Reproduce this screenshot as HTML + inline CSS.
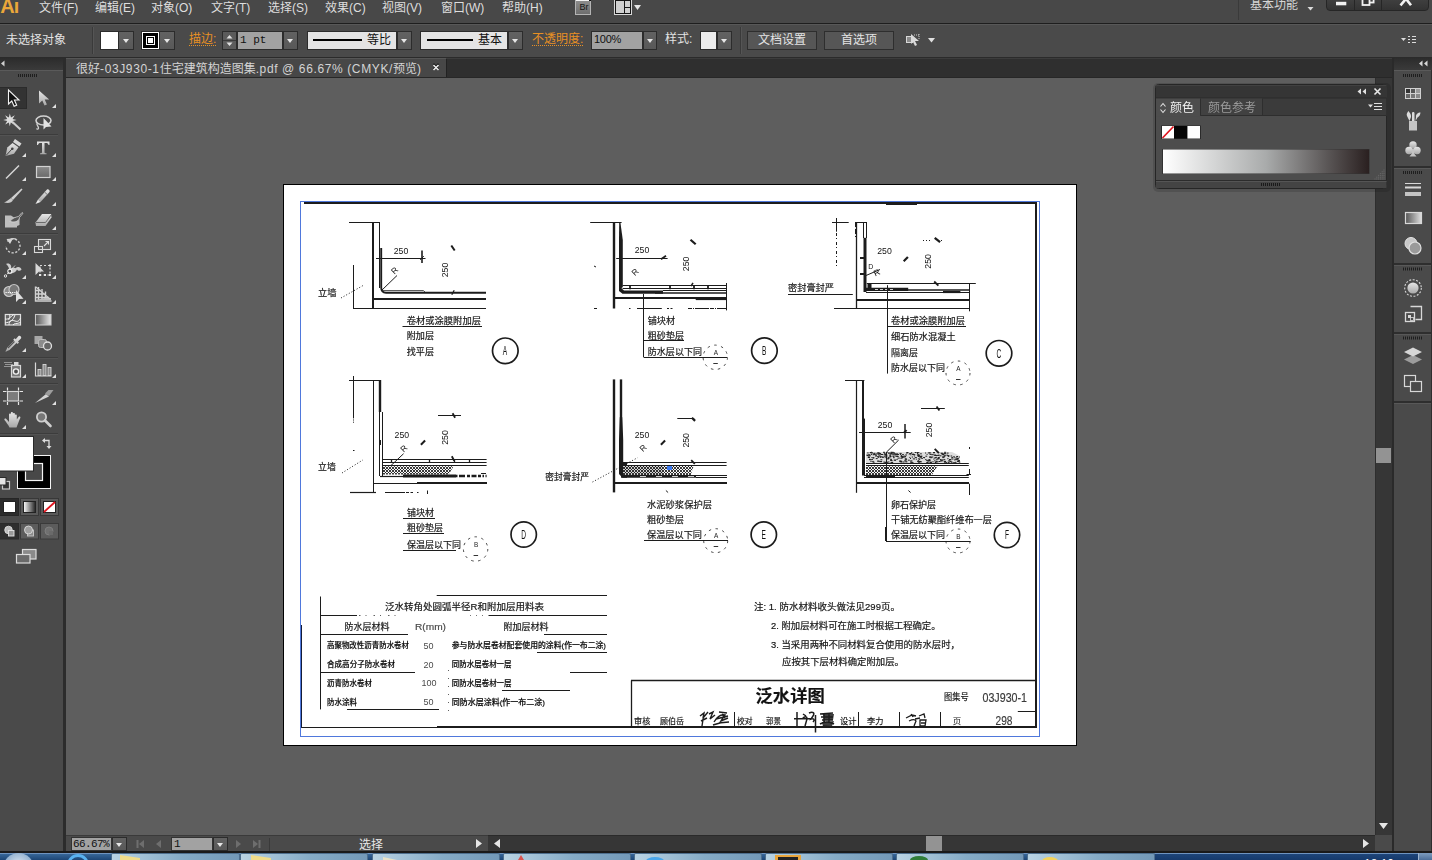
<!DOCTYPE html>
<html lang="zh-CN"><head><meta charset="utf-8"><title>Adobe Illustrator</title>
<style>
html,body{margin:0;padding:0}
body{width:1432px;height:860px;overflow:hidden;position:relative;background:#5e5e5e;
 font-family:"Liberation Sans","Noto Sans CJK SC",sans-serif;font-size:12px;color:#dcdcdc}
.a{position:absolute}
.t{position:absolute;white-space:nowrap;line-height:1}
#menubar{left:0;top:0;width:1432px;height:23px;background:#484848}
#menusep{left:0;top:23px;width:1432px;height:1px;background:#1e1e1e}
#ctrl{left:0;top:24px;width:1432px;height:33px;background:#4a4a4a;border-top:1px solid #585858;box-sizing:border-box}
#ctrlsep{left:0;top:57px;width:1432px;height:1px;background:#2b2b2b}
#tabbar{left:66px;top:58px;width:1326px;height:20px;background:#2f2f2f;border-top:1px solid #3c3c3c;border-bottom:1px solid #272727;box-sizing:border-box}
#tab{left:66px;top:58px;width:381px;height:19px;background:#474747;border-top:1px solid #565656;border-right:1px solid #222;box-sizing:border-box}
.mi{top:2px;font-size:12px;color:#dedede}
.ml{letter-spacing:0}
.tl{letter-spacing:.62px}
.dd{background:linear-gradient(#626262,#585858);border:1px solid #2c2c2c;box-sizing:border-box}
.dd:after{content:"";position:absolute;left:50%;top:50%;margin:-1.500px 0 0 -3.500px;border:3.500px solid transparent;border-top:4.500px solid #e6e6e6;border-bottom:0}
.org{color:#e89024;border-bottom:1px dotted #e89024;padding-bottom:0px}
.btn{background:#565656;border:1px solid #2e2e2e;box-sizing:border-box;text-align:center;color:#e4e4e4;font-size:12px}
svg{position:absolute;left:0;top:0;overflow:visible}

</style></head>
<body>
<div class="a" id="menubar"></div><div class="a" id="menusep"></div>
<div class="t" style="left:.2px;top:-4px;font-size:20px;font-weight:bold;color:#eaa73a;letter-spacing:-.8px">Ai</div>
<div class="t mi" style="left:39px">文件<span class="ml">(F)</span></div>
<div class="t mi" style="left:95px">编辑<span class="ml">(E)</span></div>
<div class="t mi" style="left:151px">对象<span class="ml">(O)</span></div>
<div class="t mi" style="left:211px">文字<span class="ml">(T)</span></div>
<div class="t mi" style="left:268px">选择<span class="ml">(S)</span></div>
<div class="t mi" style="left:325px">效果<span class="ml">(C)</span></div>
<div class="t mi" style="left:382px">视图<span class="ml">(V)</span></div>
<div class="t mi" style="left:441px">窗口<span class="ml">(W)</span></div>
<div class="t mi" style="left:502px">帮助<span class="ml">(H)</span></div>
<div class="a" style="left:575px;top:-1px;width:16px;height:16px;background:linear-gradient(#8e8e8e,#6e6e6e);border:1px solid #b4b4b4;box-sizing:border-box"></div>
<div class="a" style="left:576px;top:0;width:13px;height:1px;background:#f4f4f4"></div><div class="a" style="left:589px;top:0;width:2px;height:1px;background:#111"></div>
<div class="t" style="left:579.5px;top:3px;font-size:9px;color:#161616">Br</div>
<svg width="1432" height="24"><rect x="614.5" y="-1.500" width="17" height="16" fill="#cfcfcf" stroke="#d8d8d8"/><rect x="615.5" y="0.500" width="15" height="13" fill="none" stroke="#151515"/><path d="M624.500 0V14M624.500 7.500H631" stroke="#151515" fill="none"/><path d="M634 5h7l-3.500 5z" fill="#e4e4e4"/></svg>
<div class="a" style="left:1238px;top:0;width:1px;height:20px;background:#3a3a3a"></div>
<div class="t" style="left:1250px;top:-1px;font-size:12px;color:#d6d6d6">基本功能</div>
<svg width="1432" height="24"><path d="M1307.500 7h6l-3 3.500z" fill="#dcdcdc"/></svg>
<div class="a" style="left:1326px;top:-6px;width:103px;height:17px;background:linear-gradient(#454545,#333);border:1px solid #262626;border-radius:4px;box-sizing:border-box"></div>
<div class="a" style="left:1354px;top:0;width:1px;height:10px;background:#262626"></div><div class="a" style="left:1381px;top:0;width:1px;height:10px;background:#262626"></div>
<svg width="1432" height="24"><rect x="1336" y="1.800" width="10.300" height="3.500" fill="#f2f2f2"/><rect x="1366" y="-4" width="7.600" height="6.500" fill="none" stroke="#f2f2f2" stroke-width="1.800"/><rect x="1362.500" y="-1" width="7" height="6" fill="#363636" stroke="#f2f2f2" stroke-width="1.800"/><path d="M1400.500 5.300l5.500-6.500l5 6.500" stroke="#f2f2f2" stroke-width="2.600" fill="none"/></svg>
<div class="a" id="ctrl"></div><div class="a" id="ctrlsep"></div>
<div class="t" style="left:6px;top:34px;font-size:12px;color:#e2e2e2">未选择对象</div>
<div class="a" style="left:92px;top:27px;width:1px;height:27px;background:#3a3a3a"></div><div class="a" style="left:93px;top:27px;width:1px;height:27px;background:#555"></div>
<div class="a" style="left:100px;top:31px;width:19px;height:19px;background:#fff;border:1px solid #2c2c2c;box-sizing:border-box"></div>
<div class="a dd" style="left:118px;top:31px;width:16px;height:19px"></div>
<div class="a" style="left:141px;top:31px;width:19px;height:19px;background:#fff;border:1px solid #2c2c2c;box-sizing:border-box"></div><div class="a" style="left:143px;top:33px;width:15px;height:15px;background:#000"></div>
<div class="a" style="left:146px;top:36px;width:9px;height:9px;border:1px solid #fff;box-sizing:border-box;background:#000"></div>
<div class="a" style="left:148px;top:38px;width:5px;height:5px;background:#fff"></div>
<div class="a dd" style="left:159px;top:31px;width:16px;height:19px"></div>
<div class="t org" style="left:189px;top:33px;font-size:12px">描边:</div>
<div class="a" style="left:222px;top:31px;width:15px;height:19px;background:#5b5b5b;border:1px solid #2c2c2c;box-sizing:border-box"></div>
<svg width="1432" height="60"><path d="M226.5 38.5l3-3.5l3 3.5zM226.5 42.5l3 3.5l3-3.5z" fill="#e0e0e0"/><path d="M223 40.5h13" stroke="#3a3a3a"/></svg>
<div class="a" style="left:237px;top:31px;width:46px;height:19px;background:#a2a2a2;border:1px solid #2c2c2c;box-sizing:border-box"></div>
<div class="t" style="left:240px;top:35px;font-size:11px;color:#111;font-family:'Liberation Mono',monospace">1 pt</div>
<div class="a dd" style="left:283px;top:31px;width:15px;height:19px"></div>
<div class="a" style="left:307px;top:31px;width:90px;height:19px;background:#e4e4e4;border:1px solid #2c2c2c;box-sizing:border-box"></div>
<div class="a" style="left:313px;top:39px;width:49px;height:2px;background:#000"></div>
<div class="t" style="left:367px;top:34px;font-size:12px;color:#111">等比</div>
<div class="a dd" style="left:397px;top:31px;width:15px;height:19px"></div>
<div class="a" style="left:420px;top:31px;width:88px;height:19px;background:#e4e4e4;border:1px solid #2c2c2c;box-sizing:border-box"></div>
<div class="a" style="left:427px;top:39px;width:46px;height:2px;background:#000"></div>
<div class="t" style="left:478px;top:34px;font-size:12px;color:#111">基本</div>
<div class="a dd" style="left:508px;top:31px;width:15px;height:19px"></div>
<div class="t org" style="left:532px;top:33px;font-size:12px">不透明度:</div>
<div class="a" style="left:591px;top:31px;width:52px;height:19px;background:#a2a2a2;border:1px solid #2c2c2c;box-sizing:border-box"></div>
<div class="t" style="left:594px;top:34px;font-size:11px;color:#111;letter-spacing:-0.3px">100%</div>
<div class="a dd" style="left:643px;top:31px;width:14px;height:19px"></div>
<div class="t" style="left:665px;top:33px;font-size:12px;color:#e2e2e2">样式:</div>
<div class="a" style="left:700px;top:31px;width:17px;height:19px;background:#ececec;border:1px solid #2c2c2c;box-sizing:border-box"></div>
<div class="a dd" style="left:717px;top:31px;width:15px;height:19px"></div>
<div class="a" style="left:740px;top:27px;width:1px;height:27px;background:#3a3a3a"></div><div class="a" style="left:741px;top:27px;width:1px;height:27px;background:#555"></div>
<div class="a btn" style="left:747px;top:31px;width:70px;height:19px;line-height:17px">文档设置</div>
<div class="a btn" style="left:824px;top:31px;width:70px;height:19px;line-height:17px">首选项</div>
<svg width="1432" height="60"><rect x="906.5" y="36.5" width="6" height="6" fill="#8a8a8a" stroke="#d8d8d8"/><path d="M911 34l8 7h-4l2 4l-2 1l-2 -4l-2 2z" fill="#dadada"/><path d="M914 35h6M919 34v5" stroke="#ccc" stroke-dasharray="1 1"/><path d="M928 38h7l-3.5 4.5z" fill="#e0e0e0"/><path d="M1401 38h5l-2.5 3z" fill="#dcdcdc"/><path d="M1408 36.5h2M1412 36.5h4M1408 39.5h2M1412 39.5h4M1408 42.5h2M1412 42.5h4" stroke="#dcdcdc"/></svg>
<div class="a" id="tabbar"></div><div class="a" id="tab"></div>
<div class="t" style="left:76px;top:63px;font-size:12px;color:#d4d4d4">很好<span class="tl">-03J930-1</span>住宅建筑构造图集<span class="tl">.pdf @ 66.67% (CMYK/</span>预览<span class="tl">)</span></div>
<svg width="1432" height="80"><path d="M433.500 63.800l5 5M438.500 63.800l-5 5" stroke="#111" stroke-width="1.500"/><path d="M433.500 65l5 5M438.500 65l-5 5" stroke="#eee" stroke-width="1.500"/></svg>
<div class="a" style="left:1375px;top:78px;width:17px;height:757px;background:#363636;border-left:1px solid #2e2e2e;box-sizing:border-box"></div>
<div class="a" style="left:1376px;top:448px;width:15px;height:15px;background:#939393"></div>
<div class="a" style="left:66px;top:835px;width:1326px;height:16px;background:#363636;border-top:1px solid #2a2a2a;box-sizing:border-box"></div>
<div class="a" style="left:66px;top:835px;width:422px;height:16px;background:#4a4a4a;border-top:1px solid #3a3a3a;box-sizing:border-box"></div>
<div class="a" style="left:1375px;top:835px;width:17px;height:16px;background:#4a4a4a"></div>
<div class="a" style="left:926px;top:836px;width:16px;height:15px;background:#939393"></div>
<div class="a" style="left:71px;top:837px;width:41px;height:14px;background:#a2a2a2;border:1px solid #333;box-sizing:border-box"></div>
<div class="t" style="left:73px;top:838.500px;font-size:11px;color:#111;font-family:'Liberation Mono',monospace;letter-spacing:-0.6px;width:37px;overflow:hidden">66.67%</div>
<div class="a dd" style="left:112px;top:837px;width:15px;height:14px"></div>
<div class="a" style="left:171px;top:837px;width:42px;height:14px;background:#a2a2a2;border:1px solid #333;box-sizing:border-box"></div>
<div class="t" style="left:174px;top:838.500px;font-size:11px;color:#111;font-family:'Liberation Mono',monospace">1</div>
<div class="a dd" style="left:213px;top:837px;width:15px;height:14px"></div>
<div class="a" style="left:269px;top:838px;width:1px;height:13px;background:#3a3a3a"></div>
<div class="t" style="left:359px;top:839px;font-size:12px;color:#e8e8e8">选择</div>
<svg width="1432" height="860"><g fill="#6e6e6e"><path d="M136.5 840h2v8h-2zM144 840v8l-5-4zM161 840v8l-5-4zM236 840v8l5-4zM253 840v8l5-4zM258.5 840h2v8h-2z"/></g><g fill="#e6e6e6"><path d="M476 839v9l6-4.500zM500 839v9l-6-4.500zM1363 839v9l6-4.500zM1379 823h9l-4.500 6z"/></g></svg>
<div class="a" style="left:0;top:851px;width:1432px;height:2px;background:#1a1a1a"></div>
<div class="a" style="left:0;top:853px;width:1432px;height:7px;background:linear-gradient(#3b6c9e,#1d4676)"></div><div class="a" style="left:0;top:853px;width:1432px;height:1px;background:#6f94c0"></div>
<div class="a" style="left:3px;top:853px;width:31px;height:31px;border-radius:50%;background:radial-gradient(circle at 50% 40%,#dfe9f3,#7fa3c7 70%,#2f5f93)"></div>
<div class="a" style="left:67px;top:854px;width:22px;height:22px;border-radius:50%;border:3px solid #59b2f0;box-sizing:border-box"></div>
<div class="a" style="left:111px;top:853px;width:129px;height:8px;background:linear-gradient(90deg,#b9d3e3,#85abc6 55%,#7399b8);border:1px solid #4e6f8e;border-bottom:0;border-radius:2px 2px 0 0;box-sizing:border-box"></div>
<div class="a" style="left:240px;top:853px;width:128px;height:8px;background:linear-gradient(90deg,#b9d3e3,#85abc6 55%,#7399b8);border:1px solid #4e6f8e;border-bottom:0;border-radius:2px 2px 0 0;box-sizing:border-box"></div>
<div class="a" style="left:372px;top:853px;width:128px;height:8px;background:linear-gradient(90deg,#b9d3e3,#85abc6 55%,#7399b8);border:1px solid #4e6f8e;border-bottom:0;border-radius:2px 2px 0 0;box-sizing:border-box"></div>
<div class="a" style="left:503px;top:853px;width:128px;height:8px;background:linear-gradient(90deg,#b9d3e3,#85abc6 55%,#7399b8);border:1px solid #4e6f8e;border-bottom:0;border-radius:2px 2px 0 0;box-sizing:border-box"></div>
<div class="a" style="left:634px;top:853px;width:128px;height:8px;background:linear-gradient(90deg,#b9d3e3,#85abc6 55%,#7399b8);border:1px solid #4e6f8e;border-bottom:0;border-radius:2px 2px 0 0;box-sizing:border-box"></div>
<div class="a" style="left:765px;top:853px;width:128px;height:8px;background:linear-gradient(90deg,#b9d3e3,#85abc6 55%,#7399b8);border:1px solid #4e6f8e;border-bottom:0;border-radius:2px 2px 0 0;box-sizing:border-box"></div>
<div class="a" style="left:896px;top:853px;width:128px;height:8px;background:linear-gradient(90deg,#b9d3e3,#85abc6 55%,#7399b8);border:1px solid #4e6f8e;border-bottom:0;border-radius:2px 2px 0 0;box-sizing:border-box"></div>
<div class="a" style="left:1027px;top:853px;width:128px;height:8px;background:linear-gradient(90deg,#b9d3e3,#85abc6 55%,#7399b8);border:1px solid #4e6f8e;border-bottom:0;border-radius:2px 2px 0 0;box-sizing:border-box"></div>
<svg width="1432" height="860"><path d="M120 855l20 3v3h-20z" fill="#f0dc8a"/><path d="M251 855l20 3v3h-20z" fill="#f0dc8a"/><path d="M383 857l14 3h-14z" fill="#e8e2c8"/><path d="M518 860l3-5l3 5z" fill="#d9534f"/><ellipse cx="655" cy="861" rx="9" ry="4" fill="#49a6ea"/><rect x="775" y="855" width="26" height="6" fill="#e9a53b"/><rect x="778" y="857" width="20" height="4" fill="#222"/><ellipse cx="919" cy="860" rx="9" ry="4" fill="#2f7d3a"/><ellipse cx="1050" cy="861" rx="8" ry="4" fill="#f2d25c"/></svg>
<div class="a" style="left:1155px;top:853px;width:263px;height:7px;background:linear-gradient(#1f477c,#163a6c)"></div><div class="a" style="left:1155px;top:853px;width:263px;height:1px;background:#6f94c0"></div>
<div class="a" style="left:1418px;top:853px;width:14px;height:7px;background:linear-gradient(#7d9cbf,#4d6f99);border-left:1px solid #9fb6d0;box-sizing:border-box"></div>
<div class="t" style="left:1364px;top:858px;font-size:12px;color:#fff">18:10</div><div class="a" style="left:0;top:58px;width:63px;height:793px;background:#4a4a4a"></div>
<div class="a" style="left:63px;top:58px;width:3px;height:793px;background:#2c2c2c"></div>
<div class="a" style="left:0;top:58px;width:63px;height:12px;background:linear-gradient(#2c2c2c,#3a3a3a)"></div>
<div class="a" style="left:0;top:70px;width:63px;height:1px;background:#5a5a5a"></div>
<div class="a" style="left:0;top:87px;width:27px;height:22px;background:#333;border:1px solid #2b2b2b;border-left:0;box-sizing:border-box"></div>
<div class="a" style="left:0;top:134px;width:58px;height:1px;background:#3c3c3c"></div><div class="a" style="left:0;top:135px;width:58px;height:1px;background:#535353"></div>
<div class="a" style="left:0;top:233px;width:58px;height:1px;background:#3c3c3c"></div><div class="a" style="left:0;top:234px;width:58px;height:1px;background:#535353"></div>
<div class="a" style="left:0;top:357px;width:58px;height:1px;background:#3c3c3c"></div><div class="a" style="left:0;top:358px;width:58px;height:1px;background:#535353"></div>
<div class="a" style="left:0;top:383px;width:58px;height:1px;background:#3c3c3c"></div><div class="a" style="left:0;top:384px;width:58px;height:1px;background:#535353"></div>
<div class="a" style="left:0;top:433px;width:58px;height:1px;background:#3c3c3c"></div><div class="a" style="left:0;top:434px;width:58px;height:1px;background:#535353"></div>
<svg width="70" height="860" viewBox="0 0 70 860"><defs><linearGradient id="gi" x1="0" y1="0" x2="0" y2="1"><stop offset="0" stop-color="#e6e6e6"/><stop offset="1" stop-color="#a8a8a8"/></linearGradient><linearGradient id="gh" x1="0" y1="0" x2="1" y2="0"><stop offset="0" stop-color="#555"/><stop offset="1" stop-color="#e8e8e8"/></linearGradient><linearGradient id="gr" x1="0" y1="0" x2="0" y2="1"><stop offset="0" stop-color="#8a8a8a"/><stop offset="1" stop-color="#6a6a6a"/></linearGradient></defs><path d="M4.500 60.500v6l-3.500-3z" fill="#d0d0d0"/><path d="M18 75.500h20" stroke="#1e1e1e" stroke-width="3" stroke-dasharray="1 1"/><path d="M56 104v4h-4z" fill="#e0e0e0"/><path d="M26 153v4h-4z" fill="#e0e0e0"/><path d="M56 153v4h-4z" fill="#e0e0e0"/><path d="M26 177v4h-4z" fill="#e0e0e0"/><path d="M56 177v4h-4z" fill="#e0e0e0"/><path d="M56 202v4h-4z" fill="#e0e0e0"/><path d="M56 226v4h-4z" fill="#e0e0e0"/><path d="M26 251v4h-4z" fill="#e0e0e0"/><path d="M56 251v4h-4z" fill="#e0e0e0"/><path d="M26 275v4h-4z" fill="#e0e0e0"/><path d="M56 275v4h-4z" fill="#e0e0e0"/><path d="M26 300v4h-4z" fill="#e0e0e0"/><path d="M56 300v4h-4z" fill="#e0e0e0"/><path d="M26 348v4h-4z" fill="#e0e0e0"/><path d="M26 374v4h-4z" fill="#e0e0e0"/><path d="M56 374v4h-4z" fill="#e0e0e0"/><path d="M56 401v4h-4z" fill="#e0e0e0"/><path d="M26 425v4h-4z" fill="#e0e0e0"/><path d="M8.500 90v14l3.300-3l2.300 5.300l2.600-1.100l-2.300-5.200h4.600z" fill="#111" stroke="#f2f2f2" stroke-width="1.100" stroke-linejoin="miter"/><path d="M39 90.500v13l3.300-3l2.200 5l2.400-1l-2.200-5h4.500z" fill="url(#gi)"/><path d="M9.800 113.500l1.200 4l3.800-2.200l-2.200 3.600l4 1.200l-4 .9l1.500 3.500l-3.300-2l-1 3.800l-1-3.900l-3.600 2.100l2-3.500l-4-1l4-1.100l-2.100-3.600l3.700 2.200z" fill="#dcdcdc"/><path d="M12.500 122l8 7.500" stroke="#cfcfcf" stroke-width="2"/><ellipse cx="43.500" cy="120.500" rx="7.500" ry="4.500" fill="none" stroke="#d2d2d2" stroke-width="1.600"/><path d="M37.500 123c-2 2 1 3 1 5c0 1.500-1.500 1.500-2 .5" fill="none" stroke="#d2d2d2" stroke-width="1.300"/><path d="M43.500 118v11.500l2.500-2.600l5.500-.4z" fill="#e2e2e2"/><path d="M15 139l6.500 4.500l-2 3l-6.500-4.500z" fill="#d8d8d8"/><path d="M12.500 143l6 4.200l-4.500 6.500l-8.500 2.300l1.800-8.500z" fill="url(#gi)"/><path d="M6 155.500l6-6.500" stroke="#444" stroke-width="1"/><circle cx="12.300" cy="148.700" r="1.300" fill="#444"/><path d="M37 141.500h12.500v3.500h-1c-.3-1.500-1-2.100-2.500-2.100h-1.500v9c0 1 .5 1.300 2 1.400v.9h-6.500v-.9c1.500-.1 2-.4 2-1.400v-9h-1.500c-1.500 0-2.200.6-2.500 2.100h-1z" fill="url(#gi)"/><path d="M6 178.500l13-13" stroke="#d8d8d8" stroke-width="1.500"/><rect x="36.500" y="166.500" width="13.500" height="11" fill="url(#gr)" stroke="#d2d2d2" stroke-width="1.200"/><path d="M21.500 188.500l1 1l-9.500 10.500l-2-2z" fill="#d0d0d0"/><path d="M11 198l2 2c-1 3-5 3.500-9 2.500c2.500-.5 4-2.500 7-4.500z" fill="#c8c8c8"/><path d="M47 189.500c1-1 3.500 1 2.500 2.500l-9 10l-2.500-2.500z" fill="url(#gi)"/><path d="M38 199.500l2.500 2.500l-5 2z" fill="#e8e8e8"/><path d="M44.500 192l2.800 2.600" stroke="#777" stroke-width="1"/><path d="M5 215.500h6l3 2h5.500v7.500l-2.500 1v1.500h-12z" fill="#bdbdbd"/><path d="M10 221.500c2-3.500 6-4.500 8.500-5l3.500-4l1 .8l-3.500 4.200c-.5 3-3 5.500-9.500 4z" fill="#555" stroke="#dedede" stroke-width=".7"/><path d="M42 214h9l.5 3.500l-6 8.500h-9.500l-.5-3.500z" fill="url(#gi)"/><path d="M36 222.500h9.500l6-8" fill="none" stroke="#6a6a6a" stroke-width="1"/><path d="M8 241a7 7 0 1 1 -2 5" fill="none" stroke="#cfcfcf" stroke-width="1.400" stroke-dasharray="2.200 1.600"/><path d="M6.500 239l6.500-.5l-3 5.500z" fill="#d8d8d8"/><path d="M7.500 241.500a7 7 0 0 1 9 -2" fill="none" stroke="#cfcfcf" stroke-width="1.400"/><rect x="38.500" y="239.500" width="12" height="10" fill="#5c5c5c" stroke="#d8d8d8" stroke-width="1.100"/><rect x="34.500" y="246.500" width="8" height="6" fill="none" stroke="#d8d8d8" stroke-width="1.100"/><path d="M44 246l4.500-4.500M45.500 241.500h3v3" fill="none" stroke="#e0e0e0" stroke-width="1.100"/><path d="M6 264c2.500 2 4 5 2.500 9.500c3.500.5 7.500-1 8.500-4c1 1.500 3 1.700 4.500.3c-.5-3-4-3.500-6-1.500c-1.500-1-3-1-4.500 0c1-3-1.500-6-5-4.300z" fill="#cdcdcd"/><path d="M5.500 276l10-11" stroke="#f0f0f0" stroke-width="1" stroke-dasharray="1.500 1"/><circle cx="9.800" cy="271.300" r="2" fill="#4a4a4a" stroke="#f4f4f4" stroke-width="1.100"/><circle cx="5.500" cy="276" r="1.200" fill="#4a4a4a" stroke="#f4f4f4" stroke-width=".9"/><rect x="40" y="265.500" width="10" height="9.500" fill="none" stroke="#d8d8d8" stroke-width="1.200" stroke-dasharray="2 2"/><path d="M35.500 263v12l3.500-3.500h5z" fill="#d8d8d8"/><g fill="#e6e6e6"><rect x="49" y="264.500" width="2" height="2"/><rect x="49" y="274" width="2" height="2"/><rect x="39" y="274" width="2" height="2"/><rect x="44" y="274" width="2" height="2"/></g><circle cx="9" cy="291.500" r="5" fill="#8a8a8a" stroke="#cfcfcf" stroke-width="1.200"/><circle cx="14" cy="289.500" r="5" fill="#777" stroke="#c4c4c4" stroke-width="1.200"/><path d="M5.500 292.500h10" stroke="#fff" stroke-width="1.200" stroke-dasharray="1.200 1"/><path d="M16 290v12l3-3l4.500-.3z" fill="#e0e0e0"/><path d="M35.500 286.500v14.500h16M38.500 287v13M42 289v10.500M45.500 291.500v8M35.500 290.500h5M35.500 294h9M35.500 297.500h13" stroke="#d2d2d2" stroke-width="1.400" fill="none"/><path d="M35 300l16 0l0-2l-5-.2z" fill="#bdbdbd"/><path d="M36 287l14 12" stroke="#cfcfcf" stroke-width="1.100"/><rect x="5.300" y="314.500" width="15.200" height="10.500" fill="#666" stroke="#e0e0e0" stroke-width="1.200"/><path d="M5 319c4 1 6-3 9-4.500M5 323c5-1 8-2 10-8M9 325c0-5 3-5 6-4s4 0 5.500-3M13 325c1-2 4-1 7.500-2.500M9.500 314.500c1 2 0 4-1 5.500" fill="none" stroke="#f0f0f0" stroke-width="1"/><rect x="35.500" y="314.500" width="15.500" height="10.500" fill="url(#gh)" stroke="#c8c8c8" stroke-width="1.100"/><path d="M18.500 336c1.500-1 3.500 1 2.500 2.500l-3 3l1 1l-1.500 1.500l-1-1l-7 7l-2.500 1l-1 .8l-.6-.6l.8-1l1-2.500l7-7l-1-1l1.500-1.500l1 1z" fill="url(#gi)"/><path d="M8 348l6.500-6.500" stroke="#555" stroke-width="1.100"/><rect x="34.500" y="336" width="8" height="8" fill="#a8a8a8"/><rect x="38.500" y="339.500" width="8" height="8" rx="2" fill="#8c8c8c" stroke="#bcbcbc"/><circle cx="47.500" cy="346" r="4" fill="#666" stroke="#e0e0e0" stroke-width="1.300"/><rect x="11.500" y="365.500" width="9" height="11.500" fill="#777" stroke="#d8d8d8" stroke-width="1.200"/><rect x="14" y="362" width="4.500" height="3.500" fill="#d8d8d8"/><circle cx="16" cy="371.500" r="2.600" fill="#4a4a4a" stroke="#f0f0f0" stroke-width="1.400"/><path d="M4.500 362.500h8M5.500 364.500h7M4.500 366.500h7" stroke="#e0e0e0" stroke-width="1" stroke-dasharray="1 1"/><path d="M35.500 362.500v13.500h16" fill="none" stroke="#d8d8d8" stroke-width="1.200"/><rect x="38" y="369.500" width="3" height="6" fill="#8c8c8c" stroke="#d8d8d8" stroke-width=".9"/><rect x="43" y="364.500" width="3" height="11" fill="#8c8c8c" stroke="#d8d8d8" stroke-width=".9"/><rect x="48" y="367.500" width="3" height="8" fill="#8c8c8c" stroke="#d8d8d8" stroke-width=".9"/><rect x="7.500" y="391.500" width="11" height="9.500" fill="#7c7c7c" stroke="#d8d8d8" stroke-width="1.100"/><path d="M3 391.500h3.500M19.500 391.500h3.500M3 401h3.500M19.500 401h3.500M7.500 387.500v3M18.500 387.500v3M7.500 402v3M18.500 402v3" stroke="#e6e6e6" stroke-width="1.200"/><path d="M35 403l11-9l3 2.500z" fill="#d4d4d4"/><path d="M45 393.500l3.500-3.500h5l-4.500 6z" fill="#9c9c9c"/><path d="M9.500 427.500c-1.500-3-3.500-5.500-5-7.500c-.6-1 .8-2 1.800-1l2.700 3v-7.500c0-1.200 1.900-1.200 1.900 0v-1.500c0-1.300 2-1.300 2 0v1c0-1.300 2-1.300 2 0v1.500c0-1.200 1.900-1.200 1.900 0v4l1.800-2.500c.8-1 2.300-.2 1.700 1c-1.200 2.500-2.500 6-3.800 9.500z" fill="url(#gi)"/><circle cx="41.500" cy="417" r="4.600" fill="#777" stroke="#cfcfcf" stroke-width="1.800"/><path d="M45 420.500l5.500 5.500" stroke="#cfcfcf" stroke-width="2.600" stroke-linecap="round"/><rect x="17.500" y="455.500" width="33" height="33" fill="#000" stroke="#f4f4f4" stroke-width="1"/><rect x="25.500" y="463.500" width="17" height="17" fill="#484848" stroke="#f4f4f4" stroke-width="1.200"/><rect x="-1" y="436.500" width="34.500" height="34.500" fill="#fff" stroke="#2a2a2a" stroke-width="1"/><path d="M43.500 440.500h5.500v6" fill="none" stroke="#dcdcdc" stroke-width="1.300"/><path d="M42 440.500l3-2.500v5zM49 449l-2.500-3h5z" fill="#dcdcdc"/><rect x="2.500" y="481.500" width="7" height="7.500" fill="#333" stroke="#c8c8c8" stroke-width="1.200"/><rect x="-1.500" y="477.500" width="7.500" height="7.500" fill="#e4e4e4" stroke="#2a2a2a" stroke-width="1"/><rect x="-1" y="498.500" width="19.500" height="17" fill="#2c2c2c" stroke="#262626"/><rect x="20.5" y="498.500" width="18" height="17" fill="#5a5a5a" stroke="#383838"/><rect x="40.5" y="498.500" width="18" height="17" fill="#5a5a5a" stroke="#383838"/><rect x="3.500" y="501.500" width="12" height="11" fill="#fff" stroke="#222"/><linearGradient id="gm" x1="0" y1="0" x2="1" y2="0"><stop offset="0" stop-color="#fff"/><stop offset="1" stop-color="#222"/></linearGradient><rect x="23.500" y="501.500" width="12" height="11" fill="url(#gm)" stroke="#222"/><rect x="43.500" y="501.500" width="12" height="11" fill="#fff" stroke="#222"/><path d="M44 512l11-10" stroke="#e0141e" stroke-width="1.800"/><rect x="-1" y="523.500" width="19.500" height="15.500" fill="#2e2e2e" stroke="#2a2a2a"/><rect x="20.500" y="523.500" width="18" height="15.500" fill="#5c5c5c" stroke="#3a3a3a"/><rect x="40.500" y="523.500" width="18" height="15.500" fill="#5c5c5c" stroke="#3a3a3a"/><circle cx="8.500" cy="530" r="3.800" fill="#bdbdbd" stroke="#e4e4e4" stroke-width=".8"/><rect x="8.500" y="530.500" width="5.500" height="5.500" fill="#9a9a9a" stroke="#e4e4e4" stroke-width=".9"/><rect x="27.500" y="530" width="6" height="6" fill="#8a8a8a" stroke="#c8c8c8" stroke-width=".9"/><circle cx="28.500" cy="530" r="4" fill="#a0a0a0" stroke="#dcdcdc" stroke-width=".9"/><circle cx="49" cy="531" r="4" fill="#707070" stroke="#808080" stroke-width=".9"/><rect x="49" y="531" width="4" height="4" fill="#6a6a6a"/><rect x="22.500" y="549.500" width="13.500" height="9.500" fill="#8a8a8a" stroke="#dcdcdc" stroke-width="1.200"/><rect x="16.500" y="554.500" width="13.500" height="8.500" fill="#6a6a6a" stroke="#dcdcdc" stroke-width="1.200"/></svg><svg width="1432" height="860" viewBox="0 0 1432 860" font-family="'Liberation Sans','Noto Sans CJK SC',sans-serif" fill="none" style="will-change:transform"><defs><pattern id="xh" width="3" height="3" patternUnits="userSpaceOnUse"><rect width="3" height="3" fill="#f6f6f6"/><path d="M0 0L3 3M3 0L0 3" stroke="#181818" stroke-width=".85"/></pattern></defs><rect x="283.500" y="184.500" width="793" height="561" fill="#fff" stroke="#000" stroke-width="1"/><path d="M304 203L1037 203" stroke="#1c1c1c" stroke-width="2"/><path d="M1036 202L1036 728" stroke="#1c1c1c" stroke-width="2"/><path d="M437 727L1037 727" stroke="#1c1c1c" stroke-width="2"/><path d="M301 727.5L437 727.5" stroke="#1c1c1c" stroke-width="1"/><path d="M301 625L301 728" stroke="#141c38" stroke-width="2"/><path d="M886 204.5L917 204.5" stroke="#1c1c1c" stroke-width="1"/><rect x="300.500" y="201.500" width="739" height="535" stroke="#4f78dc" stroke-width="1"/><path d="M349 222.5L380 222.5" stroke="#1c1c1c" stroke-width="1"/><path d="M373 222L373 308.5" stroke="#1c1c1c" stroke-width="2"/><path d="M379.5 222L379.5 288" stroke="#1c1c1c" stroke-width="1"/><path d="M381.200 248V287.500Q381.200 292.700 386 292.700H486" stroke="#1c1c1c" stroke-width="1.9" fill="none"/><path d="M383 290.600H423.500l1.500 1.500" stroke="#1c1c1c" stroke-width="0.8" fill="none"/><path d="M373 299L486 299" stroke="#1c1c1c" stroke-width="2"/><path d="M353 308.5L486 308.5" stroke="#1c1c1c" stroke-width="1"/><path d="M353.5 265L353.5 308.4" stroke="#1c1c1c" stroke-width="1"/><path d="M376 258.5L425.5 258.5" stroke="#1c1c1c" stroke-width="1"/><path d="M422 250.5L422 263" stroke="#1c1c1c" stroke-width="1.6"/><path d="M420.2 259.8L423.8 256.2" stroke="#1c1c1c" stroke-width="1"/><text x="401" y="254.1" font-size="8.7" fill="#141414" text-anchor="middle">250</text><text x="0" y="3.1" font-size="8.7" fill="#141414" text-anchor="middle" transform="translate(445 270) rotate(-90)">250</text><path d="M451.3 245.5L454.7 250.5" stroke="#1c1c1c" stroke-width="2"/><path d="M451.8 294.7L454.2 290.3" stroke="#1c1c1c" stroke-width="1.3"/><path d="M381.5 290.5L397 275.5" stroke="#1c1c1c" stroke-width="1"/><text x="0" y="3.1" font-size="8.5" fill="#141414" text-anchor="middle" transform="translate(394.5 270.5) rotate(-45)">R</text><text x="318" y="295.9" font-size="9" fill="#161616" stroke="#161616" stroke-width=".18" textLength="18.5" lengthAdjust="spacingAndGlyphs">立墙</text><path d="M341 298L364 285" stroke="#1c1c1c" stroke-width="1" stroke-dasharray="1 2"/><text x="406.7" y="324.2" font-size="9" fill="#161616" stroke="#161616" stroke-width=".18" textLength="74.3" lengthAdjust="spacingAndGlyphs">卷材或涂膜附加层</text><path d="M402.5 326.5L482 326.5" stroke="#1c1c1c" stroke-width="1"/><text x="406.7" y="339.2" font-size="9" fill="#161616" stroke="#161616" stroke-width=".18" textLength="27.3" lengthAdjust="spacingAndGlyphs">附加层</text><text x="406.7" y="354.9" font-size="9" fill="#161616" stroke="#161616" stroke-width=".18" textLength="27.3" lengthAdjust="spacingAndGlyphs">找平层</text><circle cx="505.3" cy="350.8" r="12.8" fill="none" stroke="#1c1c1c" stroke-width="1.7"/><text x="0" y="4.3" font-size="12" fill="#111" text-anchor="middle" transform="translate(505 350.6) scale(0.55 1)">A</text><path d="M590.2 222.5L621.6 222.5" stroke="#1c1c1c" stroke-width="1"/><path d="M614 222L614 308.5" stroke="#1c1c1c" stroke-width="2.4"/><path d="M619.200 222.400H620.400L622.800 240V287L619 290V240z" stroke="#1c1c1c" stroke-width="0" fill="#1c1c1c"/><path d="M619 286L624 290.600H663V293.800H622.500L619 291z" stroke="#1c1c1c" stroke-width="0" fill="#1c1c1c"/><path d="M663 290.5L726.4 290.5" stroke="#1c1c1c" stroke-width="1"/><path d="M655 293L726.4 293" stroke="#1c1c1c" stroke-width="1.6"/><path d="M622.6 285.5L726.4 285.5" stroke="#1c1c1c" stroke-width="1"/><path d="M622.6 288.5L726.4 288.5" stroke="#1c1c1c" stroke-width="1"/><path d="M630 285.4L630 289.2" stroke="#1c1c1c" stroke-width="1.8"/><path d="M670 285.4L670 289.2" stroke="#1c1c1c" stroke-width="1.8"/><path d="M694 285.4L694 289.2" stroke="#1c1c1c" stroke-width="1.8"/><path d="M708 285.4L708 289.2" stroke="#1c1c1c" stroke-width="1.8"/><path d="M614 298L726.4 298" stroke="#1c1c1c" stroke-width="2"/><path d="M695.7 299.5L726.4 299.5" stroke="#1c1c1c" stroke-width="1.2"/><path d="M594 308.5L597 308.5" stroke="#1c1c1c" stroke-width="1"/><path d="M629 308.5L630.5 308.5" stroke="#1c1c1c" stroke-width="1"/><path d="M637 308.5L661.8 308.5" stroke="#1c1c1c" stroke-width="1"/><path d="M667 308.5L674 308.5" stroke="#1c1c1c" stroke-width="1" stroke-dasharray="2 1.5"/><path d="M688 308.5L726.4 308.5" stroke="#1c1c1c" stroke-width="1" stroke-dasharray="4 1 1 1 14 1"/><path d="M726.5 283L726.5 310.4" stroke="#1c1c1c" stroke-width="1"/><path d="M643.5 294L643.5 357" stroke="#1c1c1c" stroke-width="1"/><text x="647.8" y="324.2" font-size="9" fill="#161616" stroke="#161616" stroke-width=".18" textLength="27.2" lengthAdjust="spacingAndGlyphs">铺块材</text><text x="647.8" y="339.2" font-size="9" fill="#161616" stroke="#161616" stroke-width=".18" textLength="36.2" lengthAdjust="spacingAndGlyphs">粗砂垫层</text><path d="M643.6 340.5L684 340.5" stroke="#1c1c1c" stroke-width="1"/><text x="647.8" y="354.9" font-size="9" fill="#161616" stroke="#161616" stroke-width=".18" textLength="54.2" lengthAdjust="spacingAndGlyphs">防水层以下同</text><path d="M643.6 357.5L727 357.5" stroke="#1c1c1c" stroke-width="1"/><circle cx="715.3" cy="357.3" r="12.2" fill="none" stroke="#1c1c1c" stroke-width="0.8" stroke-dasharray="2.5 4.5"/><text x="0" y="2.9" font-size="8" fill="#222" text-anchor="middle" transform="translate(715.8 352) scale(0.8 1)">A</text><path d="M713.3 363.5L717.8 363.5" stroke="#333" stroke-width="1"/><circle cx="764.4" cy="350.6" r="12.8" fill="none" stroke="#1c1c1c" stroke-width="1.7"/><text x="0" y="4.3" font-size="12" fill="#111" text-anchor="middle" transform="translate(764.2 350.6) scale(0.55 1)">B</text><text x="642" y="253.4" font-size="8.7" fill="#141414" text-anchor="middle">250</text><path d="M616.2 258.5L667.6 258.5" stroke="#1c1c1c" stroke-width="1"/><path d="M661 259.2L666 255.8" stroke="#1c1c1c" stroke-width="1.8"/><text x="0" y="3.1" font-size="8.7" fill="#141414" text-anchor="middle" transform="translate(685.8 263.9) rotate(-90)">250</text><path d="M690.5 239.7L695.7 244.3" stroke="#1c1c1c" stroke-width="2.2"/><path d="M691 286.2L693 282.8" stroke="#1c1c1c" stroke-width="1.5"/><text x="0" y="3.1" font-size="8.5" fill="#141414" text-anchor="middle" transform="translate(635 272) rotate(-45)">R</text><path d="M594 266L596 267" stroke="#1c1c1c" stroke-width="1"/><path d="M856.5 222L856.5 308.5" stroke="#1c1c1c" stroke-width="1.3"/><path d="M855.5 222L855.5 237" stroke="#1c1c1c" stroke-width="1" stroke-dasharray="5 2"/><path d="M863.5 222L863.5 238" stroke="#1c1c1c" stroke-width="1"/><path d="M866.5 222L866.5 238" stroke="#1c1c1c" stroke-width="1"/><path d="M865 237.8L865 292" stroke="#1c1c1c" stroke-width="3"/><path d="M832 222.5L848.7 222.5" stroke="#1c1c1c" stroke-width="1"/><path d="M856 222.5L866.8 222.5" stroke="#1c1c1c" stroke-width="1"/><path d="M836.5 218L836.5 231.7" stroke="#1c1c1c" stroke-width="1"/><path d="M836.5 233L836.5 266.5" stroke="#1c1c1c" stroke-width="1" stroke-dasharray="3 2 1 3"/><path d="M866.8 283.5L975.8 283.5" stroke="#1c1c1c" stroke-width="1"/><path d="M866 289.3L908.2 289.3" stroke="#1c1c1c" stroke-width="3.2"/><path d="M875 289.5L893 289.5" stroke="#fff" stroke-width="0.8" stroke-dasharray="3 2"/><path d="M908 290L969 290" stroke="#1c1c1c" stroke-width="1.6"/><path d="M866 292.5L969 292.5" stroke="#1c1c1c" stroke-width="1"/><path d="M943 292L960.4 292" stroke="#1c1c1c" stroke-width="2.2"/><rect x="867.500" y="284" width="4" height="4" fill="#1c1c1c"/><path d="M856 300L969 300" stroke="#1c1c1c" stroke-width="2.2"/><path d="M834 308.5L969 308.5" stroke="#1c1c1c" stroke-width="1"/><path d="M969.5 283L969.5 311.3" stroke="#1c1c1c" stroke-width="1"/><text x="788" y="291.2" font-size="9" fill="#161616" stroke="#161616" stroke-width=".18" textLength="46" lengthAdjust="spacingAndGlyphs">密封膏封严</text><path d="M788 294.5L852.8 294.5" stroke="#1c1c1c" stroke-width="1"/><path d="M887.5 285.2L887.5 373.6" stroke="#1c1c1c" stroke-width="1"/><text x="891" y="324.2" font-size="9" fill="#161616" stroke="#161616" stroke-width=".18" textLength="74" lengthAdjust="spacingAndGlyphs">卷材或涂膜附加层</text><path d="M887 326.5L966 326.5" stroke="#1c1c1c" stroke-width="1"/><text x="891" y="340.2" font-size="9" fill="#161616" stroke="#161616" stroke-width=".18" textLength="64.7" lengthAdjust="spacingAndGlyphs">细石防水混凝土</text><text x="891" y="355.9" font-size="9" fill="#161616" stroke="#161616" stroke-width=".18" textLength="27" lengthAdjust="spacingAndGlyphs">隔离层</text><text x="891" y="371.2" font-size="9" fill="#161616" stroke="#161616" stroke-width=".18" textLength="54" lengthAdjust="spacingAndGlyphs">防水层以下同</text><circle cx="958" cy="373" r="12" fill="none" stroke="#1c1c1c" stroke-width="0.8" stroke-dasharray="2.5 4.5"/><text x="0" y="2.9" font-size="8" fill="#222" text-anchor="middle" transform="translate(958.5 367.7) scale(0.8 1)">A</text><path d="M956 379.5L960.5 379.5" stroke="#333" stroke-width="1"/><circle cx="999" cy="353.3" r="12.8" fill="none" stroke="#1c1c1c" stroke-width="1.7"/><text x="0" y="4.3" font-size="12" fill="#111" text-anchor="middle" transform="translate(999 353.3) scale(0.55 1)">C</text><text x="884.5" y="253.8" font-size="8.7" fill="#141414" text-anchor="middle">250</text><text x="0" y="3.1" font-size="8.7" fill="#141414" text-anchor="middle" transform="translate(928.3 261.4) rotate(-90)">250</text><path d="M934.7 237.8L940.1 242.2" stroke="#1c1c1c" stroke-width="2.2"/><path d="M923 240.5L932 240.5" stroke="#1c1c1c" stroke-width="1" stroke-dasharray="1 2"/><path d="M941 240.5L942 240.5" stroke="#1c1c1c" stroke-width="1"/><path d="M903.7 261.2L907.9 257" stroke="#1c1c1c" stroke-width="2.2"/><path d="M934.2 281.5L938.4 285.7" stroke="#1c1c1c" stroke-width="1.8"/><text x="0" y="3.1" font-size="8.5" fill="#141414" text-anchor="middle" transform="translate(876.8 272.5) rotate(-25)">R</text><path d="M866 275.5L880 269.5" stroke="#1c1c1c" stroke-width="1"/><path d="M860 258L866 258" stroke="#1c1c1c" stroke-width="2"/><path d="M860 274L866 274" stroke="#1c1c1c" stroke-width="2"/><text x="870.8" y="269" font-size="7" fill="#141414" text-anchor="middle">D</text><path d="M349 380.5L380 380.5" stroke="#1c1c1c" stroke-width="1"/><path d="M353.5 376L353.5 418.4" stroke="#1c1c1c" stroke-width="1"/><path d="M353.5 419.5L353.5 423" stroke="#1c1c1c" stroke-width="1" stroke-dasharray="1 1.2"/><path d="M353 450.5L354.5 450.5" stroke="#1c1c1c" stroke-width="1"/><path d="M373.5 380L373.5 492.5" stroke="#1c1c1c" stroke-width="1"/><path d="M380 380L380 412" stroke="#1c1c1c" stroke-width="2.4"/><path d="M379.5 412L379.5 476" stroke="#1c1c1c" stroke-width="1"/><path d="M382.5 412L382.5 476" stroke="#1c1c1c" stroke-width="1"/><path d="M380 440L380 445" stroke="#1c1c1c" stroke-width="2"/><path d="M382.7 459.5L486.6 459.5" stroke="#1c1c1c" stroke-width="1.2"/><path d="M382.7 462.5L486.6 462.5" stroke="#1c1c1c" stroke-width="1"/><path d="M382.7 465.5L486.6 465.5" stroke="#1c1c1c" stroke-width="1"/><path d="M391.5 459L391.5 462.8" stroke="#1c1c1c" stroke-width="1.3"/><path d="M429.5 459L429.5 462.8" stroke="#1c1c1c" stroke-width="1.3"/><path d="M454.5 459L454.5 462.8" stroke="#1c1c1c" stroke-width="1.3"/><path d="M469.5 459L469.5 462.8" stroke="#1c1c1c" stroke-width="1.3"/><path d="M383 466.2H453.6L448.6 474.6H383z" fill="url(#xh)"/><path d="M380 476.5L403 476.5" stroke="#1c1c1c" stroke-width="1.2"/><path d="M403 476L456 476" stroke="#1c1c1c" stroke-width="2.8"/><path d="M456 476L486.6 476" stroke="#1c1c1c" stroke-width="2.6" stroke-dasharray="1.5 1.5 6 2 3 1.5 5 1.5 3 1.5"/><path d="M481 473.5L486 473.5" stroke="#1c1c1c" stroke-width="1"/><path d="M374 483.5L418 483.5" stroke="#1c1c1c" stroke-width="1"/><path d="M417 483L487 483" stroke="#1c1c1c" stroke-width="2.2"/><path d="M350 492.5L376 492.5" stroke="#1c1c1c" stroke-width="1.2"/><path d="M385 492.5L405 492.5" stroke="#1c1c1c" stroke-width="1"/><path d="M406 492.5L413 492.5" stroke="#1c1c1c" stroke-width="1" stroke-dasharray="3 1.5"/><path d="M417 492.5L418.5 492.5" stroke="#1c1c1c" stroke-width="1"/><path d="M427.5 490.5L427.5 494" stroke="#1c1c1c" stroke-width="1"/><text x="318" y="469.9" font-size="9" fill="#161616" stroke="#161616" stroke-width=".18" textLength="17.8" lengthAdjust="spacingAndGlyphs">立墙</text><path d="M342 473L362.8 460" stroke="#1c1c1c" stroke-width="1" stroke-dasharray="1 2"/><text x="407" y="515.8" font-size="9" fill="#161616" stroke="#161616" stroke-width=".18" textLength="27" lengthAdjust="spacingAndGlyphs">铺块材</text><path d="M403 518.5L435 518.5" stroke="#1c1c1c" stroke-width="1"/><text x="407" y="531.2" font-size="9" fill="#161616" stroke="#161616" stroke-width=".18" textLength="36" lengthAdjust="spacingAndGlyphs">粗砂垫层</text><path d="M403 533.5L444 533.5" stroke="#1c1c1c" stroke-width="1"/><text x="407" y="548.2" font-size="9" fill="#161616" stroke="#161616" stroke-width=".18" textLength="54" lengthAdjust="spacingAndGlyphs">保温层以下同</text><path d="M403 550.5L456 550.5" stroke="#1c1c1c" stroke-width="1"/><circle cx="475.6" cy="549" r="12.2" fill="none" stroke="#1c1c1c" stroke-width="0.8" stroke-dasharray="2.5 4.5"/><text x="0" y="2.9" font-size="8" fill="#222" text-anchor="middle" transform="translate(476.1 543.7) scale(0.8 1)">B</text><path d="M473.6 555.5L478.1 555.5" stroke="#333" stroke-width="1"/><circle cx="523.7" cy="534.5" r="12.7" fill="none" stroke="#1c1c1c" stroke-width="1.7"/><text x="0" y="4.3" font-size="12" fill="#111" text-anchor="middle" transform="translate(523.7 534.5) scale(0.55 1)">D</text><text x="401.8" y="438" font-size="8.7" fill="#141414" text-anchor="middle">250</text><text x="0" y="3.1" font-size="8.7" fill="#141414" text-anchor="middle" transform="translate(445.2 437.5) rotate(-90)">250</text><path d="M438 415.5L461 415.5" stroke="#1c1c1c" stroke-width="1"/><path d="M452.6 413.3L455.1 417.7" stroke="#1c1c1c" stroke-width="1.8"/><path d="M420.9 444.7L425.1 440.5" stroke="#1c1c1c" stroke-width="2"/><path d="M451.8 456.3L454.2 460.7" stroke="#1c1c1c" stroke-width="1.8"/><text x="0" y="3.1" font-size="8.5" fill="#141414" text-anchor="middle" transform="translate(403.6 448.5) rotate(-45)">R</text><path d="M391 465.5L403.6 453.7" stroke="#1c1c1c" stroke-width="1"/><path d="M614 379.4L614 492.4" stroke="#1c1c1c" stroke-width="2.4"/><path d="M621 379.4L621 418" stroke="#1c1c1c" stroke-width="2.4"/><path d="M619.600 417.500H622.400L623.200 440V462H627V477.700H622.500L619 474V440z" stroke="#1c1c1c" stroke-width="0" fill="#1c1c1c"/><path d="M623 462.5L726.6 462.5" stroke="#1c1c1c" stroke-width="1.2"/><path d="M623 465.5L726.6 465.5" stroke="#1c1c1c" stroke-width="1"/><path d="M623 466H693.6L690.6 475.5H623z" fill="url(#xh)"/><rect x="623" y="466" width="40" height="9.500" fill="#000" opacity=".15"/><path d="M621 476.4L696 476.4" stroke="#1c1c1c" stroke-width="2.6"/><path d="M640 476.5L696 476.5" stroke="#fff" stroke-width="0.8" stroke-dasharray="6 10"/><path d="M696 475.5L727 475.5" stroke="#1c1c1c" stroke-width="1"/><path d="M696 477.5L727 477.5" stroke="#1c1c1c" stroke-width="1"/><path d="M614 483L727 483" stroke="#1c1c1c" stroke-width="2.2"/><text x="545.3" y="480.2" font-size="9" fill="#161616" stroke="#161616" stroke-width=".18" textLength="43.7" lengthAdjust="spacingAndGlyphs">密封膏封严</text><path d="M592.5 482L637.6 457.7" stroke="#1c1c1c" stroke-width="1" stroke-dasharray="1 2"/><text x="647" y="507.8" font-size="9" fill="#161616" stroke="#161616" stroke-width=".18" textLength="65" lengthAdjust="spacingAndGlyphs">水泥砂浆保护层</text><text x="647" y="522.7" font-size="9" fill="#161616" stroke="#161616" stroke-width=".18" textLength="37" lengthAdjust="spacingAndGlyphs">粗砂垫层</text><text x="647" y="538.2" font-size="9" fill="#161616" stroke="#161616" stroke-width=".18" textLength="55" lengthAdjust="spacingAndGlyphs">保温层以下同</text><path d="M644 540.5L728 540.5" stroke="#1c1c1c" stroke-width="1"/><circle cx="715.7" cy="540.7" r="12" fill="none" stroke="#1c1c1c" stroke-width="0.8" stroke-dasharray="2.5 4.5"/><text x="0" y="2.9" font-size="8" fill="#222" text-anchor="middle" transform="translate(716.2 535.4) scale(0.8 1)">A</text><path d="M713.7 546.5L718.2 546.5" stroke="#333" stroke-width="1"/><circle cx="763.8" cy="534.6" r="12.7" fill="none" stroke="#1c1c1c" stroke-width="1.7"/><text x="0" y="4.3" font-size="12" fill="#111" text-anchor="middle" transform="translate(763.8 534.6) scale(0.55 1)">E</text><rect x="667" y="466" width="5" height="4" fill="#3d7af0"/><text x="642" y="437.7" font-size="8.7" fill="#141414" text-anchor="middle">250</text><text x="0" y="3.1" font-size="8.7" fill="#141414" text-anchor="middle" transform="translate(685.9 440.3) rotate(-90)">250</text><path d="M677.3 418.5L694.2 418.5" stroke="#1c1c1c" stroke-width="1"/><path d="M691.9 417.7L695.1 420.9" stroke="#1c1c1c" stroke-width="2.2"/><path d="M660.9 444.7L665.1 440.5" stroke="#1c1c1c" stroke-width="2"/><path d="M691.2 460.2L694.8 463.8" stroke="#1c1c1c" stroke-width="1.8"/><text x="0" y="3.1" font-size="8.5" fill="#141414" text-anchor="middle" transform="translate(643 448) rotate(-45)">R</text><path d="M665.9 490.5L668.1 492.5" stroke="#1c1c1c" stroke-width="1"/><path d="M845 380.5L864.4 380.5" stroke="#1c1c1c" stroke-width="1"/><path d="M856.5 380L856.5 492.8" stroke="#1c1c1c" stroke-width="1.2"/><path d="M863 380L863 475.6" stroke="#1c1c1c" stroke-width="2"/><path d="M864.5 418.6L864.5 475" stroke="#1c1c1c" stroke-width="1"/><path d="M859 432.5L910.7 432.5" stroke="#1c1c1c" stroke-width="1"/><path d="M905 424L905 438.4" stroke="#1c1c1c" stroke-width="1.5"/><path d="M903.8 432.9L906.6 430.1" stroke="#1c1c1c" stroke-width="2"/><text x="885" y="428.1" font-size="8.7" fill="#141414" text-anchor="middle">250</text><text x="0" y="3.1" font-size="8.7" fill="#141414" text-anchor="middle" transform="translate(929.3 430) rotate(-90)">250</text><path d="M921 408.5L944.8 408.5" stroke="#1c1c1c" stroke-width="1"/><path d="M936.6 406.4L939.4 410.4" stroke="#1c1c1c" stroke-width="1.8"/><text x="0" y="3.1" font-size="8.5" fill="#141414" text-anchor="middle" transform="translate(893.8 439.5) rotate(-45)">R</text><path d="M886.3 452.3L898.7 440" stroke="#1c1c1c" stroke-width="1"/><path d="M866 452h86l8 4v7.500h-94z" fill="#dedede"/><path d="M896.1 453.9h1.9M872.7 457.9h1.5M871.4 457.6h1.1M906.3 453.0h1.1M905.5 461.0h1.2M886.8 458.9h2.3M919.7 456.5h2.4M870.3 461.3h1.4M879.4 453.5h1.4M941.9 454.2h1.8M925.4 456.2h1.8M871.8 452.9h1.3M929.3 456.8h1.4M920.5 457.1h1.4M939.9 459.6h1.3M919.4 457.8h2.2M933.8 455.3h2.4M877.0 456.7h2.1M880.1 457.4h1.1M928.1 460.3h1.8M947.4 455.6h2.0M921.3 458.4h1.6M944.1 462.2h1.7M927.8 452.9h2.0M926.2 462.7h2.2M892.5 456.4h1.9M868.1 457.1h1.2M876.9 452.9h2.1M878.0 454.9h1.5M947.0 453.1h1.6M917.1 461.6h2.1M946.4 455.2h1.6M899.4 461.6h2.3M880.0 454.2h1.3M887.7 457.4h1.8M890.4 452.3h1.6M900.3 458.2h2.3M930.2 457.7h1.9M928.9 452.9h2.3M938.5 461.5h2.1M902.5 456.5h1.1M925.0 453.0h1.1M885.4 454.0h1.5M870.9 452.3h1.2M875.4 456.1h1.0M947.3 458.7h1.2M889.5 455.9h1.5M877.4 461.2h2.4M909.3 457.4h1.1M875.5 455.9h1.4M943.1 454.0h1.0M954.4 457.8h1.2M916.5 452.6h1.7M957.0 461.4h2.0M890.3 456.2h1.2M937.8 457.9h2.1M896.7 454.6h2.1M957.6 461.3h2.1M942.1 460.1h1.3M914.1 456.0h1.0M868.6 455.2h1.4M930.4 462.3h1.6M953.1 462.7h2.3M899.9 454.6h1.3M884.3 454.4h1.9M949.7 461.1h1.7M926.7 460.7h1.1M927.4 461.9h2.1M935.8 457.3h1.2M939.4 455.8h2.1M956.4 456.5h1.6M954.1 459.9h1.2M877.8 453.9h2.3M941.0 453.8h2.2M957.2 459.2h1.5M917.0 453.7h1.0M956.3 459.1h1.7M952.8 456.9h2.2M942.8 454.5h1.4M893.2 454.8h1.8M890.1 456.7h1.2M950.6 456.0h1.6M920.3 461.8h1.6M951.3 457.6h1.7M914.7 452.5h1.6M883.0 452.3h2.1M882.0 457.3h2.0M917.8 455.7h1.7M917.7 460.5h1.1M918.1 454.9h1.4M937.8 457.6h1.8M936.7 461.9h1.6M923.0 457.6h1.7M930.4 457.0h1.7M910.5 462.2h2.0M947.5 462.2h1.4M918.0 462.2h2.2M878.8 453.6h1.6M872.7 454.8h1.1M928.3 460.5h2.3M880.4 459.8h1.9M879.3 461.6h2.4M886.4 462.3h1.6M911.3 462.7h2.2M881.0 456.8h1.7M897.5 454.4h1.4M933.2 452.5h1.8M907.0 452.5h1.5M924.0 457.7h1.1M957.6 460.6h2.4M875.7 455.1h1.1M938.4 455.1h1.2M905.3 461.9h2.1M890.1 453.9h2.3M919.1 459.7h1.1M871.3 459.5h1.6M872.7 462.2h1.9M940.6 453.2h2.2M872.2 461.4h1.6M897.5 458.1h2.3M890.9 453.7h1.7M888.2 453.4h1.2M870.7 454.4h1.4M894.4 460.3h1.4M912.5 454.2h1.5M867.7 454.9h1.0M934.2 458.1h1.3M910.2 462.1h1.1M942.2 456.8h1.7M943.6 456.4h1.7M930.0 462.6h1.5M943.4 459.7h1.9M903.6 455.9h1.1M878.1 453.0h2.0M889.8 454.0h1.1M944.2 461.4h1.9M892.2 454.8h1.4M908.7 454.0h1.6M890.5 462.4h2.4M916.9 454.9h2.4M894.8 456.0h1.0M901.5 457.3h1.7M884.7 457.6h1.0M890.6 453.2h1.6M869.9 452.5h1.4M887.7 458.4h1.7M935.8 459.2h2.0M947.8 456.4h1.5M933.3 459.1h1.1M943.7 461.7h1.9M934.2 460.8h1.2M914.7 457.6h2.2M940.8 461.0h1.8M949.0 459.5h2.0M887.4 452.6h1.2M899.5 453.4h2.2M917.9 458.9h1.9M929.3 457.4h1.0M940.2 460.2h1.7M915.8 459.2h1.1M934.5 454.9h1.1M890.7 460.0h1.3M934.8 462.5h1.7M901.6 457.3h2.0M937.3 458.8h1.9M873.2 453.8h1.4M935.1 455.5h1.8M867.2 452.9h1.4M928.5 459.6h1.9M893.0 457.7h1.7M909.4 453.5h2.3M884.5 462.6h2.3M867.6 457.1h2.1M956.0 457.0h1.4M885.5 462.2h1.3M920.1 453.8h1.7M942.3 457.6h2.2M931.4 454.7h2.3M911.2 452.6h1.0M911.7 457.0h1.4M879.1 455.9h1.4M944.1 452.3h2.1M944.0 453.6h2.3M932.3 461.8h1.4M900.6 456.4h2.4M920.8 456.1h1.6M891.6 452.8h1.1M943.6 455.3h2.3M889.2 455.1h1.7M883.7 456.2h2.3M948.2 460.8h1.9M950.9 462.2h1.8M932.9 452.8h2.0M907.9 460.2h1.9M892.6 452.8h2.3M877.8 457.3h1.5M893.7 460.1h2.4M890.2 459.2h1.4M917.8 456.4h1.2M881.0 454.5h2.3M912.2 454.6h2.3M958.7 457.0h1.2M883.9 453.3h1.5M874.5 454.8h1.4M919.0 461.6h2.0M904.4 456.6h1.7M901.0 455.9h1.1M891.8 462.5h1.2M912.8 458.9h2.2M886.1 455.1h1.3M903.2 457.0h2.3M944.9 461.5h1.0M869.0 459.7h2.3M910.0 458.5h1.0M902.4 462.0h2.2M945.6 462.5h1.3M876.1 453.9h1.7M929.4 462.2h2.0M926.2 460.3h1.6M917.3 452.7h2.1M887.6 462.0h1.9M894.3 453.6h1.4M925.2 459.6h1.2M872.5 457.8h1.8M902.1 454.6h1.8M867.0 455.5h1.6M955.2 459.1h2.2M910.2 454.8h1.3M955.3 459.7h1.4M868.0 457.5h1.9M905.1 455.0h1.9M869.2 455.8h1.6M929.5 454.4h2.1M934.7 457.6h1.3M942.3 454.7h1.3M936.7 455.4h2.3M912.1 454.3h1.3M904.8 459.3h2.3M879.6 456.4h1.3M870.8 452.9h1.6M949.5 461.6h2.0M958.8 462.1h1.5M883.3 462.1h2.0M869.0 459.3h1.5M900.8 455.8h1.2M866.3 455.2h1.5M899.2 460.9h2.2M906.2 452.8h1.7M900.7 462.0h1.3M899.9 461.7h1.0M904.2 460.8h2.1M869.8 452.7h1.1M935.5 461.7h1.5M891.3 462.4h1.9M890.4 459.8h1.4M891.6 452.3h2.1M951.2 459.0h2.3M868.3 454.8h1.7M955.0 462.3h1.5M889.3 456.8h1.7M940.6 460.1h2.2M937.9 458.7h1.5M895.7 456.1h2.1M873.3 454.4h2.1M889.0 453.0h1.0M917.4 455.7h2.4M948.2 462.7h1.4M873.8 453.3h1.7M932.0 457.0h1.3M904.8 458.8h1.9M935.6 461.2h1.9M877.3 461.1h1.4M918.7 456.2h2.0M884.5 454.9h1.3M880.3 461.6h1.8M896.3 456.5h2.4M913.2 454.7h2.1M926.8 462.7h1.1M910.2 460.9h2.2M893.3 453.6h1.3M956.5 458.4h2.3M900.6 461.4h1.6M890.2 460.5h2.3M875.8 458.6h1.9M886.2 456.2h1.2M885.0 455.0h1.8M926.6 454.4h1.0M896.4 459.4h1.3M895.0 454.4h2.1M917.0 453.0h1.1" stroke="#202020" stroke-width="1"/><path d="M866 463.5L968.8 463.5" stroke="#1c1c1c" stroke-width="1.2"/><path d="M866 465.5L968.8 465.5" stroke="#1c1c1c" stroke-width="1"/><path d="M866 466.3H937.4L931.9 475H866z" fill="url(#xh)"/><path d="M864 475.5L968.8 475.5" stroke="#1c1c1c" stroke-width="1.2"/><path d="M864 477.5L968.8 477.5" stroke="#1c1c1c" stroke-width="1"/><path d="M866 476L895 476" stroke="#1c1c1c" stroke-width="2.2"/><path d="M856 483L969 483" stroke="#1c1c1c" stroke-width="2.2"/><path d="M969.5 469L969.5 474" stroke="#1c1c1c" stroke-width="1"/><path d="M966.5 474.5L971 474.5" stroke="#1c1c1c" stroke-width="1"/><path d="M969.5 483.7L969.5 495" stroke="#1c1c1c" stroke-width="1"/><path d="M969.5 447L969.5 449" stroke="#1c1c1c" stroke-width="1"/><path d="M934.7 448.9L938.9 453.1" stroke="#1c1c1c" stroke-width="2"/><path d="M886.5 452L886.5 541" stroke="#1c1c1c" stroke-width="1"/><text x="891" y="507.8" font-size="9" fill="#161616" stroke="#161616" stroke-width=".18" textLength="45" lengthAdjust="spacingAndGlyphs">卵石保护层</text><text x="891" y="522.7" font-size="9" fill="#161616" stroke="#161616" stroke-width=".18" textLength="101" lengthAdjust="spacingAndGlyphs">干铺无纺聚酯纤维布一层</text><text x="891" y="538.2" font-size="9" fill="#161616" stroke="#161616" stroke-width=".18" textLength="54" lengthAdjust="spacingAndGlyphs">保温层以下同</text><path d="M886 541.5L970.6 541.5" stroke="#1c1c1c" stroke-width="1"/><path d="M885.5 527L885.5 541" stroke="#1c1c1c" stroke-width="1"/><circle cx="958" cy="541" r="12" fill="none" stroke="#1c1c1c" stroke-width="0.8" stroke-dasharray="2.5 4.5"/><text x="0" y="2.9" font-size="8" fill="#222" text-anchor="middle" transform="translate(958.5 535.7) scale(0.8 1)">B</text><path d="M956 547.5L960.5 547.5" stroke="#333" stroke-width="1"/><circle cx="1007" cy="535" r="12.7" fill="none" stroke="#1c1c1c" stroke-width="1.7"/><text x="0" y="4.3" font-size="12" fill="#111" text-anchor="middle" transform="translate(1007 535) scale(0.55 1)">F</text><path d="M908.4 490.5L910.6 492.5" stroke="#1c1c1c" stroke-width="1"/><path d="M320.5 596.5L320.5 709.4" stroke="#1c1c1c" stroke-width="1"/><path d="M436.7 595.5L607 595.5" stroke="#1c1c1c" stroke-width="1"/><text x="385" y="610.2" font-size="9" fill="#161616" stroke="#161616" stroke-width=".18" textLength="159" lengthAdjust="spacingAndGlyphs">泛水转角处圆弧半径R和附加层用料表</text><path d="M320 615.5L357 615.5" stroke="#1c1c1c" stroke-width="1"/><path d="M488.5 615.5L607 615.5" stroke="#1c1c1c" stroke-width="1"/><path d="M359 615.5L400 615.5" stroke="#1c1c1c" stroke-width="1" stroke-dasharray="1.5 5 1 7" opacity="0.7"/><path d="M470 615.5L488 615.5" stroke="#1c1c1c" stroke-width="1" stroke-dasharray="1 5" opacity="0.6"/><text x="344.5" y="629.7" font-size="9" fill="#161616" stroke="#161616" stroke-width=".18" textLength="45" lengthAdjust="spacingAndGlyphs">防水层材料</text><text x="415" y="629.9" font-size="9.5" fill="#4a4a4a" stroke="#4a4a4a" stroke-width=".18" textLength="31" lengthAdjust="spacingAndGlyphs">R(mm)</text><text x="503.5" y="629.7" font-size="9" fill="#161616" stroke="#161616" stroke-width=".18" textLength="45" lengthAdjust="spacingAndGlyphs">附加层材料</text><path d="M320 634.5L408 634.5" stroke="#1c1c1c" stroke-width="1"/><path d="M544 634.5L607 634.5" stroke="#1c1c1c" stroke-width="1"/><text x="327" y="648.3" font-size="8" font-weight="500" fill="#0c0c0c" stroke="#0c0c0c" stroke-width=".18" textLength="82" lengthAdjust="spacingAndGlyphs">高聚物改性沥青防水卷材</text><text x="428.6" y="648.6" font-size="9" fill="#4a4a4a" text-anchor="middle">50</text><text x="451.7" y="648.3" font-size="8" font-weight="500" fill="#0c0c0c" stroke="#0c0c0c" stroke-width=".18" textLength="154.3" lengthAdjust="spacingAndGlyphs">参与防水层卷材配套使用的涂料(作一布二涂)</text><path d="M537 652.5L607 652.5" stroke="#1c1c1c" stroke-width="1"/><text x="327" y="667.4" font-size="8" font-weight="500" fill="#0c0c0c" stroke="#0c0c0c" stroke-width=".18" textLength="68" lengthAdjust="spacingAndGlyphs">合成高分子防水卷材</text><text x="428.6" y="667.7" font-size="9" fill="#4a4a4a" text-anchor="middle">20</text><text x="451.7" y="667.4" font-size="8" font-weight="500" fill="#0c0c0c" stroke="#0c0c0c" stroke-width=".18" textLength="59.9" lengthAdjust="spacingAndGlyphs">同防水层卷材一层</text><path d="M320 672.5L415 672.5" stroke="#1c1c1c" stroke-width="1"/><path d="M570 672.5L607 672.5" stroke="#1c1c1c" stroke-width="1"/><text x="327" y="685.9" font-size="8" font-weight="500" fill="#0c0c0c" stroke="#0c0c0c" stroke-width=".18" textLength="45" lengthAdjust="spacingAndGlyphs">沥青防水卷材</text><text x="429" y="686.2" font-size="9" fill="#4a4a4a" text-anchor="middle">100</text><text x="451.7" y="685.9" font-size="8" font-weight="500" fill="#0c0c0c" stroke="#0c0c0c" stroke-width=".18" textLength="59.9" lengthAdjust="spacingAndGlyphs">同防水层卷材一层</text><path d="M502 690.5L570 690.5" stroke="#1c1c1c" stroke-width="1"/><text x="327" y="704.9" font-size="8" font-weight="500" fill="#0c0c0c" stroke="#0c0c0c" stroke-width=".18" textLength="30" lengthAdjust="spacingAndGlyphs">防水涂料</text><text x="428.6" y="705.2" font-size="9" fill="#4a4a4a" text-anchor="middle">50</text><text x="451.7" y="704.9" font-size="8" font-weight="500" fill="#0c0c0c" stroke="#0c0c0c" stroke-width=".18" textLength="93.3" lengthAdjust="spacingAndGlyphs">同防水层涂料(作一布二涂)</text><path d="M347 709.5L439 709.5" stroke="#1c1c1c" stroke-width="1"/><path d="M448.5 670L448.5 712" stroke="#1c1c1c" stroke-width="1" stroke-dasharray="1 7" opacity="0.7"/><text x="754" y="609.8" font-size="9" fill="#161616" stroke="#161616" stroke-width=".18" textLength="146" lengthAdjust="spacingAndGlyphs">注: 1. 防水材料收头做法见299页。</text><text x="771" y="629.2" font-size="9" fill="#161616" stroke="#161616" stroke-width=".18" textLength="169.6" lengthAdjust="spacingAndGlyphs">2. 附加层材料可在施工时根据工程确定。</text><text x="771" y="647.7" font-size="9" fill="#161616" stroke="#161616" stroke-width=".18" textLength="189" lengthAdjust="spacingAndGlyphs">3. 当采用两种不同材料复合使用的防水层时，</text><text x="782" y="665.2" font-size="9" fill="#161616" stroke="#161616" stroke-width=".18" textLength="122" lengthAdjust="spacingAndGlyphs">应按其下层材料确定附加层。</text><path d="M631 680.5L1036 680.5" stroke="#1c1c1c" stroke-width="1.3"/><path d="M631.5 680.5L631.5 727" stroke="#1c1c1c" stroke-width="1.3"/><text x="755.6" y="701.5" font-size="16.5" font-weight="bold" fill="#111" stroke="#111" stroke-width=".18" textLength="69.1" lengthAdjust="spacingAndGlyphs">泛水详图</text><text x="944" y="700.2" font-size="9" fill="#161616" stroke="#161616" stroke-width=".18" textLength="24.6" lengthAdjust="spacingAndGlyphs">图集号</text><text x="982.5" y="702.1" font-size="12.5" fill="#3a3a3a" stroke="#3a3a3a" stroke-width=".18" textLength="44.5" lengthAdjust="spacingAndGlyphs">03J930-1</text><path d="M1017.8 711.5L1036 711.5" stroke="#1c1c1c" stroke-width="1"/><path d="M734.5 712L734.5 727" stroke="#1c1c1c" stroke-width="1"/><path d="M858.5 712L858.5 727" stroke="#1c1c1c" stroke-width="1"/><path d="M899.5 712L899.5 727" stroke="#1c1c1c" stroke-width="1"/><path d="M940.5 712L940.5 727" stroke="#1c1c1c" stroke-width="1"/><text x="634" y="723.8" font-size="8.5" fill="#161616" stroke="#161616" stroke-width=".18" textLength="16.3" lengthAdjust="spacingAndGlyphs">审核</text><text x="660" y="723.8" font-size="8.5" fill="#161616" stroke="#161616" stroke-width=".18" textLength="24" lengthAdjust="spacingAndGlyphs">顾伯岳</text><text x="737" y="723.8" font-size="8.5" fill="#161616" stroke="#161616" stroke-width=".18" textLength="15.5" lengthAdjust="spacingAndGlyphs">校对</text><text x="766" y="723.8" font-size="8.5" fill="#161616" stroke="#161616" stroke-width=".18" textLength="15" lengthAdjust="spacingAndGlyphs">郭景</text><text x="840" y="723.8" font-size="8.5" fill="#161616" stroke="#161616" stroke-width=".18" textLength="16.5" lengthAdjust="spacingAndGlyphs">设计</text><text x="867" y="723.8" font-size="8.5" fill="#161616" stroke="#161616" stroke-width=".18" textLength="16.4" lengthAdjust="spacingAndGlyphs">李力</text><text x="957" y="723.8" font-size="8.5" fill="#141414" text-anchor="middle">页</text><text x="995.5" y="725.2" font-size="13.5" fill="#3a3a3a" stroke="#3a3a3a" stroke-width=".18" textLength="16.9" lengthAdjust="spacingAndGlyphs">298</text><path d="M700 716l4-3l-1 5l5-6M701 721l6-3M704 713l-2 13M709 714l4-2l-3 7l5-4M714 722c3-5 7-8 11-7l-4 6l7-3M716 719l12-3M713 725c5-2 10-3 16-3M722 714l3 4M719 712l8 1" stroke="#1c1c1c" stroke-width="1.4" fill="none"/><path d="M794 718.800h18M797 712v15.500M803 714l3 2M802 719c3-3 5-3 5 0l-2 7M809 713c4-2 6 0 4 3l-2 3c3-1 4 1 2 3M815.500 715v17.500M820 714l13-1M821 717h12M822 720h11M824 713v9M829 713v9M820 724c5-3 9-3 14 0M823 726l10 1" stroke="#1c1c1c" stroke-width="1.5" fill="none"/><path d="M823 714h11l-1 6h-9zM822 722l12-1l-2 5l-9 1z" fill="#1c1c1c" opacity=".85"/><path d="M906 718l6-3l4 1M911 714l2 3M909 721c4-2 6-2 7 0l-2 5M915 719l5-1M919 716l5-2l1 4M920 720h6l-1 6h-5zM921 723h5" stroke="#1c1c1c" stroke-width="1.3" fill="none"/></svg><div class="a" style="left:1392px;top:58px;width:2px;height:793px;background:#2a2a2a"></div>
<div class="a" style="left:1394px;top:58px;width:38px;height:793px;background:#4a4a4a"></div>
<div class="a" style="left:1431px;top:58px;width:1px;height:793px;background:#2e2e2e"></div>
<div class="a" style="left:1394px;top:58px;width:38px;height:12px;background:linear-gradient(#2c2c2c,#3a3a3a)"></div>
<div class="a" style="left:1394px;top:70px;width:37px;height:1px;background:#5a5a5a"></div>
<div class="a" style="left:1394px;top:166px;width:37px;height:2px;background:#2e2e2e"></div><div class="a" style="left:1394px;top:168px;width:37px;height:1px;background:#585858"></div>
<div class="a" style="left:1394px;top:263px;width:37px;height:2px;background:#2e2e2e"></div><div class="a" style="left:1394px;top:265px;width:37px;height:1px;background:#585858"></div>
<div class="a" style="left:1394px;top:332px;width:37px;height:2px;background:#2e2e2e"></div><div class="a" style="left:1394px;top:334px;width:37px;height:1px;background:#585858"></div>
<div class="a" style="left:1394px;top:401px;width:37px;height:2px;background:#2e2e2e"></div><div class="a" style="left:1394px;top:403px;width:37px;height:1px;background:#585858"></div>
<svg width="1432" height="860" viewBox="0 0 1432 860"><defs><linearGradient id="dg" x1="0" y1="0" x2="0" y2="1"><stop offset="0" stop-color="#e6e6e6"/><stop offset="1" stop-color="#a8a8a8"/></linearGradient><linearGradient id="dh" x1="0" y1="0" x2="1" y2="0"><stop offset="0" stop-color="#555"/><stop offset="1" stop-color="#e0e0e0"/></linearGradient><linearGradient id="cg" x1="0" y1="0" x2="1" y2="0"><stop offset="0" stop-color="#ffffff"/><stop offset=".5" stop-color="#a9abab"/><stop offset=".8" stop-color="#5a5656"/><stop offset="1" stop-color="#2a2020"/></linearGradient></defs><path d="M1422.500 60.500v6l-3.500-3zM1427.500 60.500v6l-3.500-3z" fill="#d8d8d8"/><path d="M1403 75.5h20" stroke="#1e1e1e" stroke-width="3" stroke-dasharray="1 1"/><path d="M1403 172.5h20" stroke="#1e1e1e" stroke-width="3" stroke-dasharray="1 1"/><path d="M1403 269h20" stroke="#1e1e1e" stroke-width="3" stroke-dasharray="1 1"/><path d="M1403 338h20" stroke="#1e1e1e" stroke-width="3" stroke-dasharray="1 1"/><rect x="1405" y="88" width="16" height="11" fill="#d0d0d0"/><g fill="#555"><rect x="1406" y="89" width="4" height="4" fill="#333"/><rect x="1411" y="89" width="4" height="4" fill="#555"/><rect x="1416" y="89" width="4" height="4" fill="#999"/><rect x="1406" y="94" width="4" height="4" fill="#666"/><rect x="1411" y="94" width="4" height="4" fill="#777"/><rect x="1416" y="94" width="4" height="4" fill="#888"/></g><rect x="1409" y="121" width="8" height="9.500" fill="#c4c4c4"/><path d="M1409.500 121l-2.500-5c-1-2 .5-4 1.500-5c.8 1.500 3 3 2.500 6zM1412 121v-8c0-1.500 2.500-1.500 2.500 0v8zM1415.500 121l.5-4c-.5-2.500 2-4.500 4.500-4.500c-.2 2-1 4-3 5z" fill="#dcdcdc"/><circle cx="1413" cy="145" r="3.700" fill="url(#dg)"/><circle cx="1409" cy="150.500" r="3.700" fill="url(#dg)"/><circle cx="1417" cy="150.500" r="3.700" fill="url(#dg)"/><path d="M1412 149h2l.5 5l2 2.500h-7l2-2.500z" fill="#c4c4c4"/><path d="M1405 183.500h16" stroke="#d8d8d8" stroke-width="1"/><path d="M1405 187.500h16" stroke="#d8d8d8" stroke-width="2"/><path d="M1405 194h16" stroke="#c4c4c4" stroke-width="4"/><rect x="1405.500" y="212.500" width="16" height="11" fill="url(#dh)" stroke="#d8d8d8" stroke-width="1.200"/><circle cx="1411" cy="243.500" r="6" fill="#c8c8c8" stroke="#e4e4e4" stroke-width="1"/><circle cx="1415" cy="248" r="6" fill="#9a9a9a" stroke="#e0e0e0" stroke-width="1.200"/><circle cx="1413" cy="288" r="8.300" fill="none" stroke="#d4d4d4" stroke-width="1.100" stroke-dasharray="2 1.500"/><circle cx="1413" cy="288" r="5.600" fill="url(#dg)"/><path d="M1410.500 306.500h11v13h-6" fill="none" stroke="#d8d8d8" stroke-width="1.300"/><rect x="1405.500" y="312.500" width="9" height="9" fill="none" stroke="#d8d8d8" stroke-width="1.300"/><rect x="1408" y="315" width="3" height="3" fill="#d8d8d8"/><rect x="1410.500" y="317.500" width="3" height="3" fill="none" stroke="#d8d8d8" stroke-width=".8"/><path d="M1413 355l9 4.500l-9 4.500l-9-4.500z" fill="#9c9c9c"/><path d="M1413 347.500l9 4.500l-9 4.500l-9-4.500z" fill="#d6d6d6"/><rect x="1404.500" y="375.500" width="11" height="11" fill="#4a4a4a" stroke="#d8d8d8" stroke-width="1.200"/><rect x="1410.500" y="381.500" width="11" height="10" fill="#4a4a4a" stroke="#d8d8d8" stroke-width="1.200"/><rect x="1153" y="83" width="238" height="109" rx="5" fill="#000" opacity=".13"/><rect x="1155.500" y="84.500" width="231" height="104" rx="3" fill="#4d4d4d" stroke="#262626"/><path d="M1156 98v-10.500a2.500 2.500 0 0 1 2.500-2.500h226a2.500 2.500 0 0 1 2.500 2.500v10.500z" fill="#353535"/><path d="M1156 85.500h230.500" stroke="#4a4a4a" stroke-width="1" opacity=".6"/><rect x="1156" y="98" width="230.500" height="18" fill="#3b3b3b"/><rect x="1156" y="97.500" width="230.500" height="1" fill="#2b2b2b"/><rect x="1200" y="98.500" width="62.500" height="17" fill="#414141"/><path d="M1262.500 98.500v17" stroke="#2e2e2e"/><path d="M1200.500 115.500h186" stroke="#2e2e2e"/><rect x="1156" y="98.500" width="44" height="18" fill="#4d4d4d"/><path d="M1200.500 98.500v17" stroke="#2e2e2e"/><path d="M1361 88.500v6l-3.500-3zM1366 88.500v6l-3.500-3z" fill="#e0e0e0"/><path d="M1374.500 88.500l6 6M1380.500 88.500l-6 6" stroke="#e8e8e8" stroke-width="1.600"/><path d="M1160.500 106.500l2.500-3l2.500 3M1160.500 109.500l2.500 3l2.500-3" fill="none" stroke="#e0e0e0" stroke-width="1.100"/><path d="M1368 104.500h5l-2.500 3z" fill="#e0e0e0"/><path d="M1374 103.500h8M1374 106.500h8M1374 109.500h8" stroke="#e0e0e0"/><rect x="1161" y="125.500" width="40" height="13.500" fill="#2a2a2a"/><rect x="1162" y="126" width="12" height="12.500" fill="#fff"/><path d="M1162.500 138l11-11.500" stroke="#e0141e" stroke-width="1.700"/><rect x="1174" y="126" width="13" height="12.500" fill="#050505"/><rect x="1187.500" y="126" width="12.500" height="12.500" fill="#fff"/><rect x="1162" y="149" width="207.500" height="25" fill="#333"/><rect x="1163" y="149.500" width="206" height="24" fill="url(#cg)"/><path d="M1384.0 179.500v-10.8" stroke="#6a6a6a" stroke-width="1" stroke-dasharray="1 .8"/><path d="M1382.2 179.500v-9.0" stroke="#6a6a6a" stroke-width="1" stroke-dasharray="1 .8"/><path d="M1380.4 179.500v-7.2" stroke="#6a6a6a" stroke-width="1" stroke-dasharray="1 .8"/><path d="M1378.6 179.500v-5.4" stroke="#6a6a6a" stroke-width="1" stroke-dasharray="1 .8"/><path d="M1376.8 179.500v-3.6" stroke="#6a6a6a" stroke-width="1" stroke-dasharray="1 .8"/><path d="M1375.0 179.500v-1.8" stroke="#6a6a6a" stroke-width="1" stroke-dasharray="1 .8"/><rect x="1156" y="180.500" width="230.500" height="7.500" fill="#444"/><path d="M1156 180.500h230.500" stroke="#2c2c2c"/><path d="M1156 181.500h230.500" stroke="#555"/><path d="M1261 184.500h20" stroke="#1a1a1a" stroke-width="3" stroke-dasharray="1 1"/></svg>
<div class="t" style="left:1170px;top:102px;font-size:12px;color:#f0f0f0">颜色</div>
<div class="t" style="left:1208px;top:102px;font-size:12px;color:#9a9a9a">颜色参考</div>
</body></html>
